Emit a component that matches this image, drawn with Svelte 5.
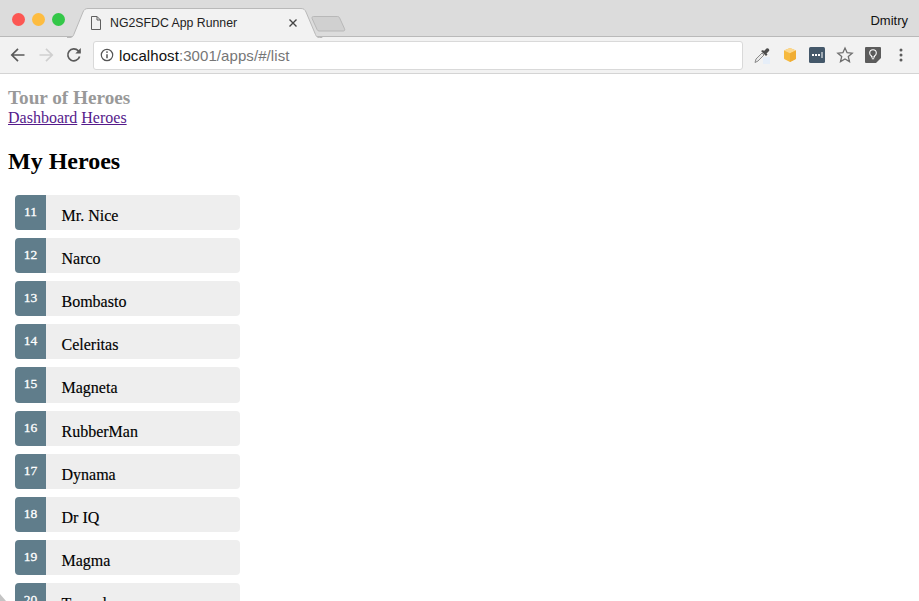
<script>
  const heroes = [
    [11, 'Mr. Nice'], [12, 'Narco'], [13, 'Bombasto'], [14, 'Celeritas'], [15, 'Magneta'],
    [16, 'RubberMan'], [17, 'Dynama'], [18, 'Dr IQ'], [19, 'Magma'], [20, 'Tornado']
  ];
</script>

<div class="window">
  <header class="chrome">
    <div class="tabstrip">
      <div class="lights">
        <span class="light red"></span>
        <span class="light yellow"></span>
        <span class="light green"></span>
      </div>
      <div class="tab">
        <svg class="tabshape" width="256" height="38" viewBox="0 0 256 38">
          <path d="M0 37.500h3c2 0 3-1 3.800-3L16 12c1-2.400 2.400-3.500 5-3.500h213c2.600 0 4 1.100 5 3.500l9.500 22.500c.8 2 1.800 3 3.800 3h3" fill="#f2f2f2" stroke="#b9b9b9"/>
        </svg>
        <svg class="doc" width="14" height="16" viewBox="0 0 14 16">
          <path d="M2.500 1.500h5.500l3.500 3.500v9.500h-9zM8 1.500v3.500h3.500" fill="none" stroke="#5f5f5f" stroke-width="1"/>
        </svg>
        <span class="title">NG2SFDC App Runner</span>
        <svg class="close" width="10" height="10" viewBox="0 0 10 10">
          <path d="M1.500 1.500l7 7M8.500 1.500l-7 7" stroke="#444" stroke-width="1.400"/>
        </svg>
      </div>
      <svg class="newtab" width="36" height="18" viewBox="0 0 36 18">
        <path d="M2.500 1.500h24c1 0 1.600.4 2 1.200l5 11c.6 1.400 0 2.300-1.300 2.300h-24c-1 0-1.600-.4-2-1.200l-5-11c-.6-1.400 0-2.300 1.300-2.300z" fill="#d0d0d0" stroke="#b8b8b8"/>
      </svg>
      <span class="user">Dmitry</span>
    </div>
    <div class="toolbar">
      <svg class="nav first" width="16" height="16" viewBox="0 0 16 16">
        <path d="M14.500 8H2M8 1.800L1.800 8 8 14.200" fill="none" stroke="#5a5a5a" stroke-width="1.700"/>
      </svg>
      <svg class="nav" width="16" height="16" viewBox="0 0 16 16">
        <path d="M1.500 8H14M8 1.800L14.200 8 8 14.200" fill="none" stroke="#cfcfcf" stroke-width="1.700"/>
      </svg>
      <svg class="nav" width="16" height="16" viewBox="0 0 16 16">
        <path d="M13.600 9.500A6 6 0 1 1 12.300 3.800L14 5.500" fill="none" stroke="#5a5a5a" stroke-width="1.700"/>
        <path d="M14.800 1v5.500H9.300z" fill="#5a5a5a"/>
      </svg>
      <div class="omnibox">
        <svg class="info" width="14" height="14" viewBox="0 0 14 14">
          <circle cx="7" cy="7" r="5.700" fill="none" stroke="#555" stroke-width="1.200"/>
          <path d="M7 6.200v4" stroke="#555" stroke-width="1.500"/>
          <circle cx="7" cy="4.100" r=".9" fill="#555"/>
        </svg>
        <span class="url"><span class="host">localhost</span>:3001/apps/#/list</span>
      </div>
      <div class="exts">
        <svg width="18" height="18" viewBox="0 0 18 18">
          <rect x="10" y="11" width="7" height="7" fill="#e6eef8"/>
          <path d="M2 16.500l1-3.500 6-6 2 2-6 6z" fill="#e9e9e9" stroke="#8a8a8a"/>
          <path d="M8 5l5 5 1.500-1.500-1-1 2.500-2.500c1-1.500-1-3.500-2.500-2.500l-2.500 2.500-1-1z" fill="#4c4c4c"/>
        </svg>
        <svg width="16" height="16" viewBox="0 0 16 16">
          <path d="M8 1l6 2.500v7.800c0 .5-.2.800-.6 1L8 15l-5.400-2.700c-.4-.2-.6-.5-.6-1V3.500z" fill="#f6b93e"/>
          <path d="M2 3.500L8 1l6 2.500L8 6.200z" fill="#fcd88f"/>
          <path d="M8 6.200l6-2.700v7.800c0 .5-.2.800-.6 1L8 15z" fill="#f0ad33"/>
        </svg>
        <svg width="16" height="16" viewBox="0 0 16 16">
          <rect width="16" height="16" rx="1.500" fill="#44586a"/>
          <path d="M3 7h2v2H3zM6 7h2v2H6zM9 7h2v2H9z" fill="#fff"/>
          <path d="M13 5v6" stroke="#fff"/>
        </svg>
        <svg width="18" height="18" viewBox="0 0 18 18">
          <path d="M9 2l2.100 4.700 5.100.5-3.900 3.400 1.200 5L9 13l-4.500 2.600 1.200-5-3.900-3.400 5.100-.5z" fill="none" stroke="#6e6e6e" stroke-width="1.300"/>
        </svg>
        <svg width="16" height="16" viewBox="0 0 16 16">
          <path d="M1 0h14a1 1 0 0 1 1 1v10l-5 5H1a1 1 0 0 1-1-1V1a1 1 0 0 1 1-1z" fill="#5c5c5c"/>
          <path d="M6.500 10V9C5.300 8.200 4.700 7.200 4.700 6a3.300 3.300 0 0 1 6.600 0c0 1.200-.6 2.200-1.800 3v1zM6.800 11.800h2.400" fill="none" stroke="#fff" stroke-width="1.100"/>
        </svg>
        <svg class="menu" width="4" height="14" viewBox="0 0 4 14">
          <circle cx="2" cy="2" r="1.500" fill="#5c5c5c"/>
          <circle cx="2" cy="7" r="1.500" fill="#5c5c5c"/>
          <circle cx="2" cy="12" r="1.500" fill="#5c5c5c"/>
        </svg>
      </div>
    </div>
  </header>

  <main class="page">
    <h1>Tour of Heroes</h1>
    <nav><a href="#dashboard">Dashboard</a> <a href="#heroes">Heroes</a></nav>
    <h2>My Heroes</h2>
    <ul>
      {#each heroes as [id, name]}
        <li>
          <span class="badge">{id}</span>
          <span class="name">{name}</span>
        </li>
      {/each}
    </ul>
  </main>
  <svg class="corner" width="6" height="7" viewBox="0 0 6 7"><path d="M0 0l6 7H0z" fill="#c4c4c4"/></svg>
</div>

<style>
  :global(body) {
    margin: 0;
    background: #fff;
  }
  .window {
    position: relative;
    height: 601px;
    overflow: hidden;
    font-family: "Liberation Serif", serif;
    font-size: 16px;
  }
  .chrome {
    font-family: "Liberation Sans", sans-serif;
    height: 74px;
    border-bottom: 1px solid #d4d4d4;
    box-sizing: border-box;
  }
  .tabstrip {
    display: flex;
    align-items: flex-start;
    height: 37px;
    background: #dcdcdc;
    border-bottom: 1px solid #b9b9b9;
    box-sizing: border-box;
    position: relative;
  }
  .lights {
    display: flex;
    gap: 7px;
    padding: 13px 0 0 12px;
    width: 72px;
    box-sizing: border-box;
    flex: none;
  }
  .light {
    width: 13px;
    height: 13px;
    border-radius: 50%;
  }
  .red { background: #fc5753; }
  .yellow { background: #fdbc40; }
  .green { background: #33c748; }
  .tab {
    position: relative;
    width: 238px;
    height: 37px;
    display: flex;
    align-items: center;
    flex: none;
    padding-top: 8px;
    box-sizing: border-box;
  }
  .tabshape {
    position: absolute;
    left: -5px;
    top: 0;
  }
  .doc {
    position: relative;
    margin-left: 17px;
    flex: none;
  }
  .title {
    position: relative;
    margin-left: 7px;
    font-size: 12.3px;
    color: #222;
    white-space: nowrap;
  }
  .close {
    position: relative;
    margin-left: 51px;
    flex: none;
  }
  .newtab {
    margin: 15px 0 0 1px;
    flex: none;
    position: relative;
  }
  .user {
    margin-left: auto;
    padding: 13px 11px 0 0;
    font-size: 13px;
    color: #111;
  }
  .toolbar {
    display: flex;
    align-items: center;
    height: 36px;
    background: #f2f2f2;
  }
  .nav {
    flex: none;
    margin-left: 12px;
  }
  .nav.first {
    margin-left: 10px;
  }
  .omnibox {
    display: flex;
    align-items: center;
    width: 650px;
    height: 29px;
    margin-left: 11px;
    background: #fff;
    border: 1px solid #d9d9d9;
    border-radius: 3px;
    box-sizing: border-box;
    flex: none;
  }
  .info {
    margin-left: 6px;
    flex: none;
  }
  .url {
    margin-left: 5px;
    font-size: 15px;
    letter-spacing: .08px;
    color: #767676;
    white-space: nowrap;
  }
  .host {
    color: #111;
  }
  .exts {
    display: flex;
    align-items: center;
    gap: 11px;
    margin-left: 10px;
  }
  .menu {
    margin-left: 7px;
  }
  .page {
    padding: 8px;
  }
  h1 {
    font-size: 19.2px;
    color: #999;
    margin: 5px 0 0;
    line-height: 22px;
  }
  nav a {
    color: #551a8b;
  }
  h2 {
    font-size: 24px;
    margin: 21px 0 0;
    line-height: 27px;
  }
  ul {
    list-style: none;
    margin: 19.7px 0 0;
    padding: 0;
    width: 240px;
  }
  li {
    display: flex;
    height: 35.2px;
    margin: 0 8px 8px;
    background: #eee;
    border-radius: 4px;
  }
  .badge {
    width: 31px;
    margin-left: -1px;
    padding-top: 10px;
    box-sizing: border-box;
    text-align: center;
    font-size: 13.5px;
    -webkit-text-stroke: .3px #fff;
    line-height: 13px;
    color: #fff;
    background: #607d8b;
    border-radius: 4px 0 0 4px;
    flex: none;
  }
  .name {
    margin-left: 15.5px;
    padding-top: 12px;
    line-height: 18px;
    -webkit-text-stroke: .15px #000;
  }
  .corner {
    position: absolute;
    left: 0;
    bottom: 0;
  }
</style>
